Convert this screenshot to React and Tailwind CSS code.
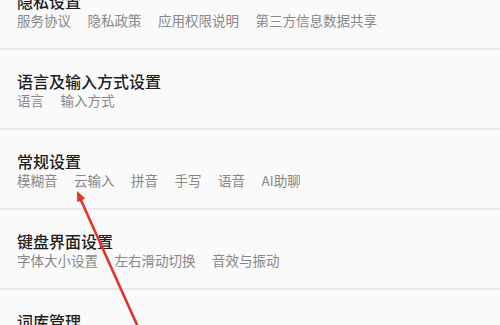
import React from "react";

const sections = [
  { title: "隐私设置", items: ["服务协议", "隐私政策", "应用权限说明", "第三方信息数据共享"] },
  { title: "语言及输入方式设置", items: ["语言", "输入方式"] },
  { title: "常规设置", items: ["模糊音", "云输入", "拼音", "手写", "语音", "AI助聊"] },
  { title: "键盘界面设置", items: ["字体大小设置", "左右滑动切换", "音效与振动"] },
  { title: "词库管理", items: [] },
];

export default function App() {
  return (
    <div
      className="relative w-[500px] h-[325px] overflow-hidden bg-[#fafafa]"
      style={{ fontFamily: '"Noto Sans CJK SC", "Noto Sans", sans-serif' }}
    >
      <div className="-mt-[30px] flex flex-col">
        {sections.map((s) => (
          <div key={s.title} className="flex flex-col">
            <div className="pl-[17px] pt-[21px] pb-[19px] flex flex-col">
              <div className="h-[20px] leading-[20px] text-[16px] font-medium text-[#1f1f1f]">{s.title}</div>
              <div className="h-[18px] leading-[18px] text-[13.5px] text-[#888888] flex gap-[16.5px]">
                {s.items.map((it) => (
                  <span key={it}>{it}</span>
                ))}
              </div>
            </div>
            <div className="h-[2px] bg-[#e9e9e9]" />
          </div>
        ))}
      </div>
      <svg className="absolute left-0 top-0" width="500" height="325" viewBox="0 0 500 325">
        <line x1="80" y1="198" x2="142" y2="336" stroke="#e2342a" strokeWidth="2.6" />
        <polygon points="77,191 77.2,202.2 85.2,198.6" fill="#e2342a" />
      </svg>
    </div>
  );
}
